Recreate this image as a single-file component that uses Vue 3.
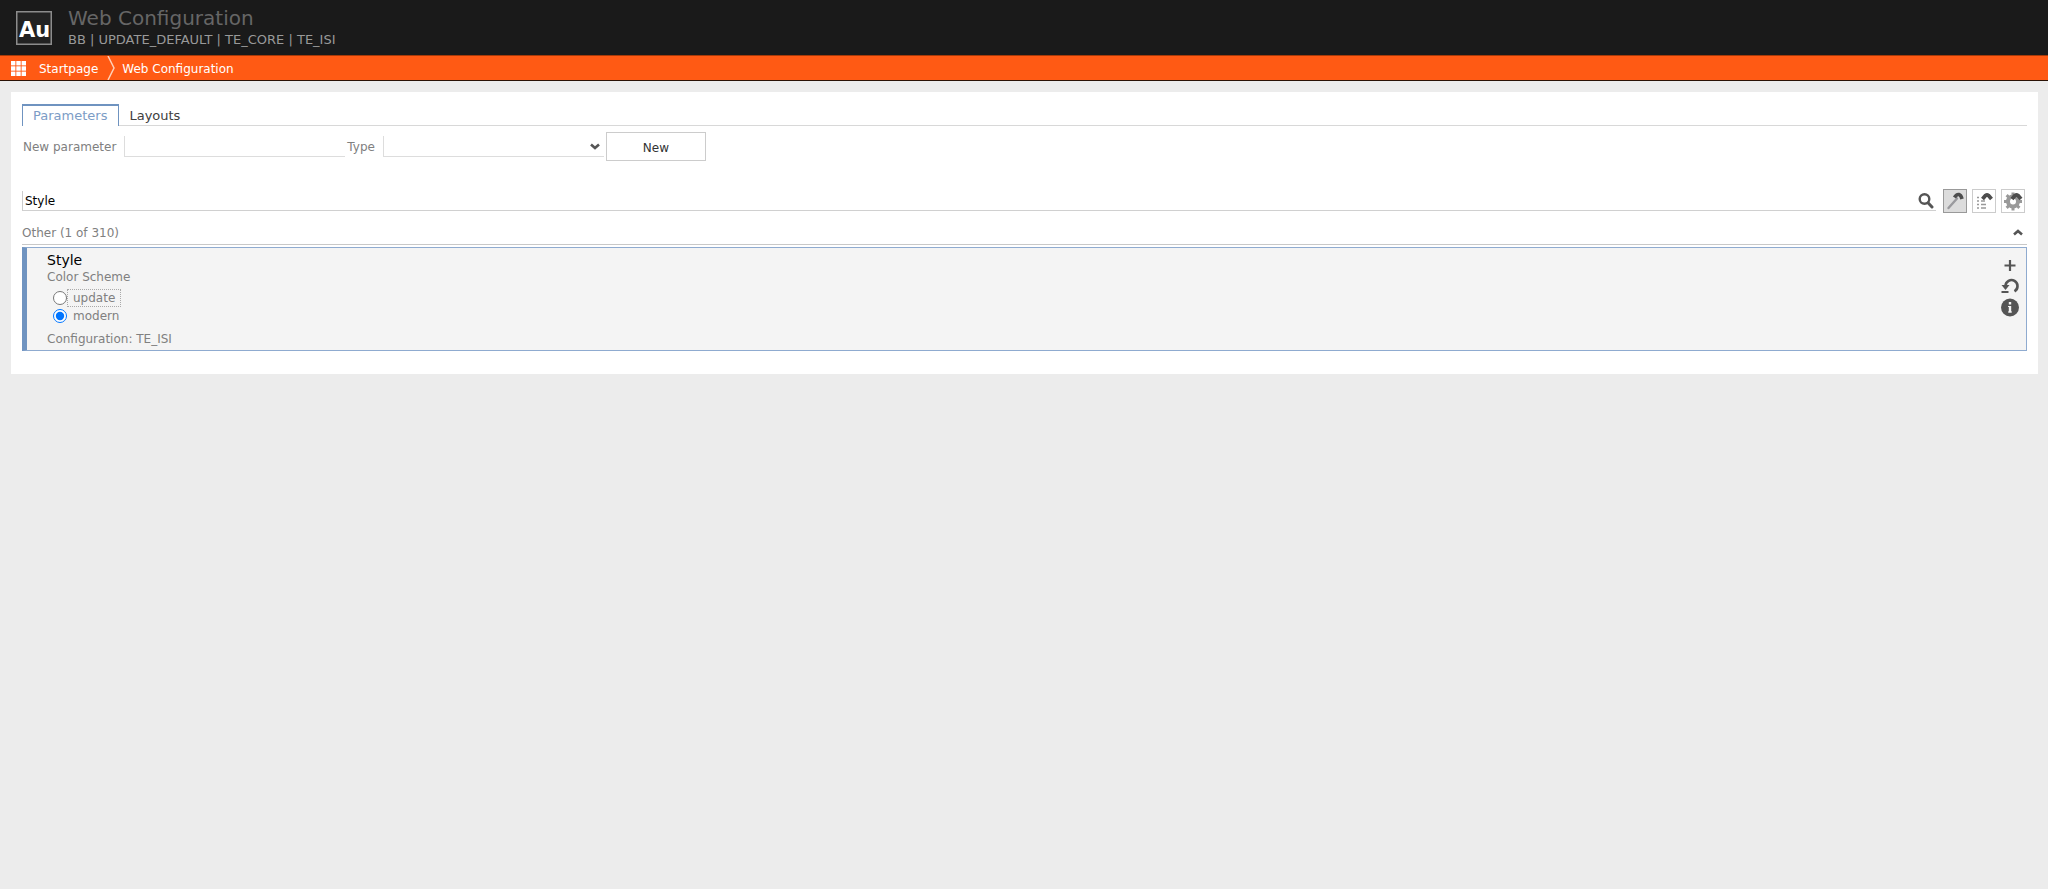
<script setup>
import { ref } from 'vue'

const tabs = ['Parameters', 'Layouts']
const activeTab = ref('Parameters')
const newParameter = ref('')
const newType = ref('')
const search = ref('Style')
const scheme = ref('modern')
const schemes = ['update', 'modern']
const collapsed = ref(false)
const gridCells = [0, 1, 2, 3, 4, 5, 6, 7, 8]
const teeth = [0, 45, 90, 135, 180, 225, 270, 315]
</script>

<template>
  <div class="page">
    <header class="app-header">
      <svg class="logo" viewBox="0 0 36 34" role="img" aria-label="Au">
        <rect x="0.75" y="0.75" width="34.5" height="32.5" fill="#222" stroke="#8c8c8c" stroke-width="1.5" />
        <text x="18.5" y="26" text-anchor="middle" font-size="21" font-weight="bold" fill="#fff">Au</text>
      </svg>
      <div class="titles">
        <h1>Web Configuration</h1>
        <p>BB | UPDATE_DEFAULT | TE_CORE | TE_ISI</p>
      </div>
    </header>

    <nav class="breadcrumb">
      <button class="apps" aria-label="Applications">
        <svg viewBox="0 0 15 15">
          <rect v-for="c in gridCells" :key="c" :x="(c % 3) * 5.3" :y="Math.floor(c / 3) * 5.3" width="4.4" height="4.4" fill="#fff" />
        </svg>
      </button>
      <a href="#">Startpage</a>
      <svg class="separator" viewBox="0 0 8 24">
        <path d="M1 0 L7 12 L1 24" fill="none" stroke="#ffd0b8" stroke-width="1.5" />
      </svg>
      <a href="#">Web Configuration</a>
    </nav>

    <main class="panel">
      <div class="tabs">
        <button v-for="tab in tabs" :key="tab" :class="['tab', { active: tab === activeTab }]" @click="activeTab = tab">{{ tab }}</button>
        <span class="tab-rest"></span>
      </div>

      <form class="new-row" @submit.prevent>
        <label for="new-parameter">New parameter</label>
        <input id="new-parameter" v-model="newParameter" class="field" type="text">
        <label for="new-type">Type</label>
        <span class="select-wrap">
          <select id="new-type" v-model="newType" class="field">
            <option value=""></option>
            <option value="text">Text</option>
          </select>
          <svg class="arrow" viewBox="0 0 10 7">
            <path d="M1 1.5 L5 5 L9 1.5" fill="none" stroke="#555" stroke-width="2.6" />
          </svg>
        </span>
        <button class="btn-new" type="submit">New</button>
      </form>

      <div class="search-row">
        <div class="search-box">
          <input v-model="search" type="text" aria-label="Search">
          <button class="icon-btn" aria-label="Search">
            <svg viewBox="0 0 16 16" fill="none" stroke="#555">
              <circle cx="6.5" cy="6" r="4.8" stroke-width="2.4" />
              <path d="M10 9.8 L14 14" stroke-width="3" stroke-linecap="round" />
            </svg>
          </button>
        </div>
        <div class="tools">
          <button class="tool pressed" aria-label="Filter">
            <svg viewBox="0 0 22 22" fill="none">
              <path d="M4.5 18 L13 8.5" stroke="#9a9a9e" stroke-width="2.4" stroke-linecap="round" />
              <path d="M10.5 7.5 Q12.5 4 15 4.5 Q17 5 18 9" stroke="#4d4d4d" stroke-width="3.6" />
            </svg>
          </button>
          <button class="tool" aria-label="Structure">
            <svg viewBox="0 0 22 22" fill="none">
              <path d="M4 7.5h2M4 11h2M4 14.5h2M4 18h2M8 11h4M8 14.5h5M8 18h5" stroke="#999" stroke-width="1.4" />
              <path d="M9.5 9 L12.5 5.5 Q14 4.500 15.500 5.500 L18.500 9" stroke="#4d4d4d" stroke-width="3.8" />
            </svg>
          </button>
          <button class="tool" aria-label="Settings">
            <svg viewBox="0 0 22 22" fill="none">
              <rect v-for="t in teeth" :key="t" x="9.5" y="2.5" width="3" height="4" fill="#999" :transform="`rotate(${t} 11 11.5)`" />
              <circle cx="11" cy="11.5" r="5" stroke="#999" stroke-width="4" />
              <path d="M10 9 L13 5.5 Q14.500 4.500 16 5.500 L19 9" stroke="#4d4d4d" stroke-width="3.8" />
            </svg>
          </button>
        </div>
      </div>

      <section>
        <div class="group-header">
          <h2>Other (1 of 310)</h2>
          <button class="toggle" aria-label="Collapse group" @click="collapsed = !collapsed">
            <svg viewBox="0 0 10 7">
              <path d="M1 5.5 L5 2 L9 5.5" fill="none" stroke="#555" stroke-width="2.6" />
            </svg>
          </button>
        </div>

        <article v-if="!collapsed" class="card">
          <div class="card-body">
            <h3>Style</h3>
            <p>Color Scheme</p>
            <div class="options" role="radiogroup" aria-label="Color Scheme">
              <div v-for="s in schemes" :key="s" class="option">
                <input :id="'scheme-' + s" v-model="scheme" type="radio" name="scheme" :value="s">
                <label :for="'scheme-' + s" :class="{ focused: s === 'update' }">{{ s }}</label>
              </div>
            </div>
            <p>Configuration: TE_ISI</p>
          </div>
          <div class="card-actions">
            <button aria-label="Add">
              <svg viewBox="0 0 20 20"><path d="M10 4.5v11M4.500 10h11" stroke="#555" stroke-width="2.2" /></svg>
            </button>
            <button aria-label="Reset">
              <svg viewBox="0 0 20 20" fill="none" stroke="#555">
                <path d="M5.5 9.5 A6 6 0 1 1 14.5 14.8" stroke-width="2.6" />
                <path d="M1.5 8.500 L9.500 8.500 L5.500 13.500 Z" fill="#555" stroke="none" />
                <path d="M1.500 15.500h7" stroke-width="2" />
              </svg>
            </button>
            <button aria-label="Information">
              <svg viewBox="0 0 20 20">
                <circle cx="10" cy="10" r="9" fill="#555" />
                <path d="M10 4.500v2.500M10 8.500v6.500" stroke="#f4f4f4" stroke-width="2.4" />
                <path d="M8 9h2M8 14.500h4" stroke="#f4f4f4" stroke-width="1" />
              </svg>
            </button>
          </div>
        </article>
      </section>
    </main>
  </div>
</template>

<style>
body {
    margin: 0;
    background: #ececec;
}
</style>

<style scoped>
.page {
    font-family: Verdana, 'DejaVu Sans', sans-serif;
    font-size: 12px;
    line-height: 16px;
    color: #808080;
}

.page * {
    box-sizing: border-box;
}

h1, h2, h3, p {
    margin: 0;
    font-weight: normal;
}

button, input, select {
    font: inherit;
    margin: 0;
}

button {
    padding: 0;
    border: 0;
    background: none;
    cursor: pointer;
}

svg {
    display: block;
}

.app-header {
    display: flex;
    align-items: flex-start;
    gap: 16px;
    height: 55px;
    padding: 11px 16px 0;
    background: #1a1a1a;
}

.logo {
    width: 36px;
    height: 34px;
}

.titles {
    margin-top: -5px;
}

.titles h1 {
    font-size: 20px;
    line-height: 24px;
    color: #666;
}

.titles p {
    font-size: 13px;
    line-height: 20px;
    color: #999;
}

.breadcrumb {
    display: flex;
    align-items: center;
    height: 26px;
    padding: 0 11px;
    border-top: 1px solid #a83a08;
    border-bottom: 1px solid #2a1206;
    background: #ff5a14;
}

.breadcrumb a {
    padding-top: 1px;
    color: #fff;
    text-decoration: none;
}

.apps {
    width: 15px;
    margin-right: 13px;
}

.separator {
    width: 8px;
    height: 24px;
    margin: 0 7px 0 9px;
}

.panel {
    margin: 11px 10px 0 11px;
    padding: 12px 11px 23px;
    background: #fff;
}

.tabs {
    display: flex;
}

.tab {
    height: 22px;
    padding: 2px 11px 0 10px;
    border-bottom: 1px solid #d8d8d8;
    font-size: 13px;
    color: #404040;
}

.tab.active {
    padding-top: 0;
    border: 1px solid #6f93c0;
    border-top-width: 2px;
    border-bottom: 0;
    color: #7c9cc6;
}

.tab-rest {
    flex: 1;
    border-bottom: 1px solid #d8d8d8;
}

.new-row {
    display: flex;
    align-items: center;
    margin-top: 6px;
    padding-left: 1px;
}

.new-row label {
    margin-right: 8px;
}

.field {
    display: block;
    width: 221px;
    height: 21px;
    margin-right: 2px;
    padding: 0 4px;
    border: 0;
    border-left: 1px solid #ddd;
    border-bottom: 1px solid #ddd;
    border-radius: 0;
    outline: 0;
    background: #fff;
    appearance: none;
}

.select-wrap {
    position: relative;
}

.arrow {
    position: absolute;
    top: 7px;
    right: 6px;
    width: 10px;
    height: 7px;
    pointer-events: none;
}

.btn-new {
    width: 100px;
    height: 29px;
    padding-top: 2px;
    border: 1px solid #ccc;
    color: #333;
}

.search-row {
    display: flex;
    align-items: center;
    justify-content: space-between;
    gap: 7px;
    margin-top: 28px;
    padding-right: 2px;
}

.search-box {
    display: flex;
    flex: 1;
    align-items: center;
    height: 20px;
    padding-right: 2px;
    border-left: 1px solid #ccc;
    border-bottom: 1px solid #d0d0d0;
}

.search-box input {
    flex: 1;
    padding: 0 2px;
    border: 0;
    outline: 0;
    color: #000;
}

.icon-btn, .icon-btn svg {
    width: 16px;
    height: 16px;
}

.tools {
    display: flex;
    gap: 5px;
}

.tool {
    width: 24px;
    height: 24px;
    border: 1px solid #ccc;
}

.tool.pressed {
    border-color: #999;
    background: #dcdcdc;
}

.group-header {
    display: flex;
    align-items: center;
    justify-content: space-between;
    height: 32px;
    padding: 8px 4px 0 0;
    border-bottom: 1px solid #c8c8c8;
}

.group-header h2 {
    font-size: 12px;
}

.toggle {
    width: 10px;
}

.card {
    display: flex;
    justify-content: space-between;
    margin-top: 2px;
    padding: 3px 6px 3px 20px;
    border: 1px solid #8fabd0;
    border-left: 5px solid #6f93c0;
    background: #f4f4f4;
}

.card h3 {
    font-size: 14px;
    line-height: 18px;
    color: #000;
}

.options {
    margin: 4px 0 6px;
    padding-left: 6px;
}

.option {
    display: flex;
    align-items: center;
    height: 18px;
}

.option input {
    width: 14px;
    height: 14px;
}

.option label {
    padding: 0 5px;
    border: 1px dotted transparent;
}

.option label.focused {
    border-color: #aaa;
}

.card-actions {
    display: flex;
    flex-direction: column;
    padding-top: 4px;
}

.card-actions button, .card-actions svg {
    width: 20px;
    height: 21px;
}
</style>
